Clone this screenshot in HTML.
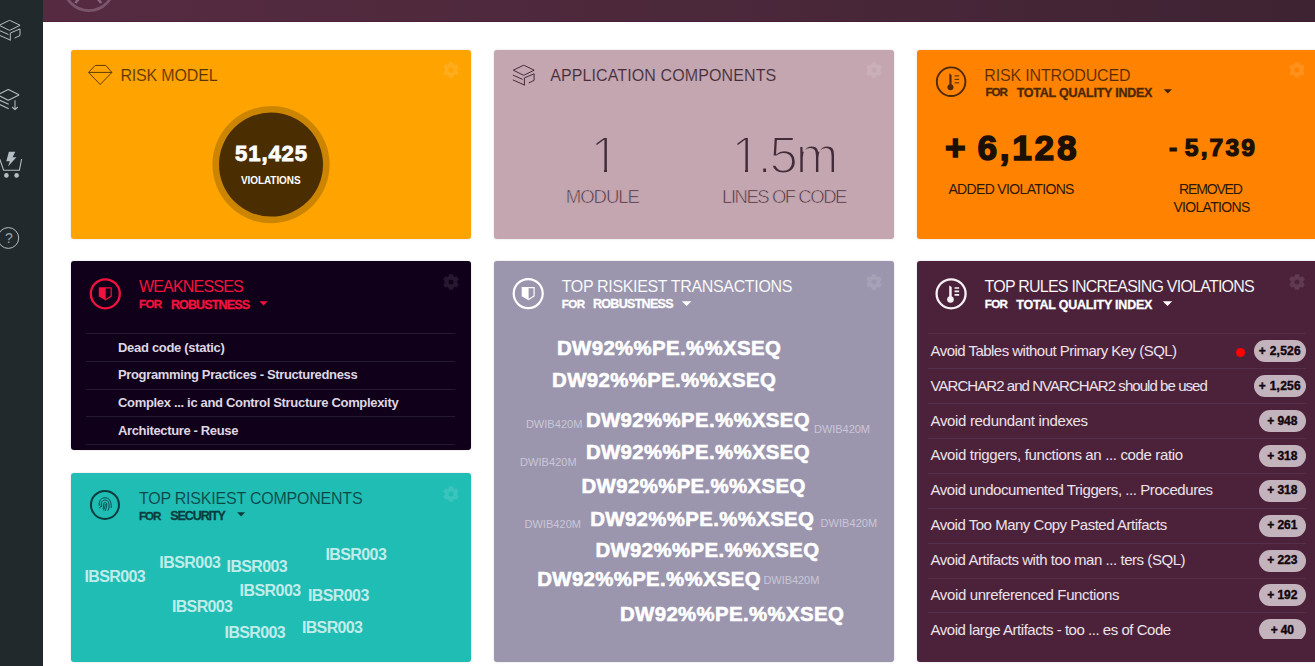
<!DOCTYPE html>
<html lang="en">
<head>
<meta charset="utf-8">
<title>Application Dashboard</title>
<style>
*{box-sizing:border-box;margin:0;padding:0}
html,body{width:1315px;height:666px;overflow:hidden;background:#fff}
body{position:relative;font-family:"Liberation Sans","DejaVu Sans",sans-serif;color:#fff}
.a{position:absolute}
.t{position:absolute;white-space:nowrap;line-height:1;font-weight:400}
svg{position:absolute;overflow:visible}
#side{left:0;top:0;width:43px;height:666px;background:#21292d}
#top{left:43px;top:0;width:1272px;height:22px;background:linear-gradient(90deg,#562b41 0%,#4c283b 50%,#3e2333 100%);border-bottom:1px solid rgba(60,10,40,.3);overflow:hidden}
.card{position:absolute;border-radius:3px;box-shadow:0 0 2px rgba(120,120,160,.35)}
#c1{left:71px;top:50px;width:400px;height:189px;background:#ffa300}
#c2{left:494px;top:50px;width:400px;height:189px;background:#c3a6b0}
#c3{left:917px;top:50px;width:400px;height:189px;background:#ff8300}
#c4{left:71px;top:261px;width:400px;height:189px;background:#11001a}
#c5{left:71px;top:473px;width:400px;height:189px;background:#20bdb5}
#c6{left:494px;top:261px;width:400px;height:401px;background:#9b96ae}
#c7{left:917px;top:261px;width:400px;height:401px;background:#4c223a}
.sep{position:absolute;height:1px}
.pill{position:absolute;height:22px;border-radius:11px;background:#c3b3bd}
</style>
</head>
<body>
<aside id="side" class="a">
<svg style="left:0px;top:0px" width="1" height="1"><g transform="translate(-1.2 20.2) scale(1.0)"><path d="M0.4 5.1 L10.1 0.4 Q10.8 0.1 11.5 0.4 L21.3 5.1 L11.5 9.9 Q10.8 10.2 10.1 9.9 Z M0 10 L9.7 14.3 M0 14.8 L11.5 19.9 M11.5 20.3 V12.8 L21.2 8.7 V15.3 L15.8 17.9" fill="none" stroke="#b4bec3" stroke-width="1.0" stroke-linejoin="round"/></g><path d="M-2.6 94.9 L7.7 89.8 Q8.3 89.5 8.9 89.8 L18.5 94.5 Q19 94.9 18.5 95.3 L8.9 100 Q8.3 100.3 7.7 100 Z M-1 99.9 L8.7 104.3 M-1 104.2 L8.7 108.7 M15 100.3 V109.3 M12.2 107 L15 109.7 L17.8 107" fill="none" stroke="#b4bec3" stroke-width="1.05" stroke-linejoin="round"/><path d="M-0.3 159 L3.6 170.2 H19.4 L21.6 159" fill="none" stroke="#b4bec3" stroke-width="1.1"/><circle cx="6.4" cy="175.4" r="2.3" fill="#b4bec3"/><circle cx="16.6" cy="175.4" r="2.3" fill="#b4bec3"/><path d="M8.9 151.8 H15.3 L12.6 157.2 H16.4 L8 166.4 L9.9 161.2 H6.3 Z" fill="#b4bec3"/><circle cx="8.3" cy="238" r="10.4" fill="none" stroke="#b4bec3" stroke-width="1"/></svg>
<span class="t" style="left:4.9px;top:231.2px;font-size:14px;color:#9aa4a9;">?</span>
</aside>
<header id="top" class="a">
<svg style="left:-43px;top:0px" width="1" height="1"><circle cx="88.9" cy="-14.5" r="25.1" fill="none" stroke="#7a566b" stroke-width="2.8"/><path d="M75.7 3.2 Q76.4 0.8 79 -1 M100.9 3.2 Q100.2 0.8 97.6 -1" fill="none" stroke="#866880" stroke-width="2.4"/></svg>
</header>
<section id="c1" class="card" aria-label="Risk model">
<svg style="left:380.1px;top:20.2px;opacity:0.11" width="1" height="1"><path d="M2.15 -5.60 L1.69 -7.62 L-1.69 -7.62 L-2.15 -5.60 L-3.78 -4.66 L-5.75 -5.27 L-7.44 -2.35 L-5.93 -0.94 L-5.93 0.94 L-7.44 2.35 L-5.75 5.27 L-3.78 4.66 L-2.15 5.60 L-1.69 7.62 L1.69 7.62 L2.15 5.60 L3.78 4.66 L5.75 5.27 L7.44 2.35 L5.93 0.94 L5.93 -0.94 L7.44 -2.35 L5.75 -5.27 L3.78 -4.66Z M2.8 0 A2.8 2.8 0 1 0 -2.8 0 A2.8 2.8 0 1 0 2.8 0Z" fill="#fff" fill-rule="evenodd" stroke="#fff" stroke-width="0.6" stroke-linejoin="round"/></svg>
<svg style="left:-71px;top:-50px" width="1" height="1"><path d="M95.2 65.4 H105.8 L111.9 72.4 L100.2 84.5 L88.6 72.4 Z M88.6 72.4 H111.9" fill="none" stroke="#5e3c02" stroke-width="1" stroke-linejoin="round"/><circle cx="271" cy="164.6" r="58.6" fill="#cc8500"/><circle cx="271" cy="164.6" r="52" fill="#4a2d00"/></svg>
<h2 class="t" style="left:49.4px;top:17.9px;font-size:16px;color:#553500;letter-spacing:-0.165px;-webkit-text-stroke:.15px #ffa300;">RISK MODEL</h2>
<span class="t" style="left:164.1px;top:93.4px;font-size:22.2px;font-weight:700;color:#fff;letter-spacing:0.835px;-webkit-text-stroke:.8px #fff;">51,425</span>
<span class="t" style="left:170px;top:125.7px;font-size:10px;font-weight:700;color:#fff;letter-spacing:-0.089px;">VIOLATIONS</span>
</section>
<section id="c2" class="card" aria-label="Application components">
<svg style="left:380.1px;top:20.2px;opacity:0.11" width="1" height="1"><path d="M2.15 -5.60 L1.69 -7.62 L-1.69 -7.62 L-2.15 -5.60 L-3.78 -4.66 L-5.75 -5.27 L-7.44 -2.35 L-5.93 -0.94 L-5.93 0.94 L-7.44 2.35 L-5.75 5.27 L-3.78 4.66 L-2.15 5.60 L-1.69 7.62 L1.69 7.62 L2.15 5.60 L3.78 4.66 L5.75 5.27 L7.44 2.35 L5.93 0.94 L5.93 -0.94 L7.44 -2.35 L5.75 -5.27 L3.78 -4.66Z M2.8 0 A2.8 2.8 0 1 0 -2.8 0 A2.8 2.8 0 1 0 2.8 0Z" fill="#fff" fill-rule="evenodd" stroke="#fff" stroke-width="0.6" stroke-linejoin="round"/></svg>
<svg style="left:-494px;top:-50px" width="1" height="1"><g transform="translate(512.9 65.1) scale(1.0)"><path d="M0.4 5.1 L10.1 0.4 Q10.8 0.1 11.5 0.4 L21.3 5.1 L11.5 9.9 Q10.8 10.2 10.1 9.9 Z M0 10 L9.7 14.3 M0 14.8 L11.5 19.9 M11.5 20.3 V12.8 L21.2 8.7 V15.3 L15.8 17.9" fill="none" stroke="#432c39" stroke-width="1.0" stroke-linejoin="round"/></g></svg>
<h2 class="t" style="left:56.2px;top:17.9px;font-size:16px;color:#432c39;letter-spacing:0.111px;-webkit-text-stroke:.15px #c3a6b0;">APPLICATION COMPONENTS</h2>
<span class="t" style="left:96.6px;top:80.1px;font-size:51.2px;color:#432c39;-webkit-text-stroke:2px #c3a6b0;">1</span>
<span class="t" style="left:237.4px;top:80.1px;font-size:51.2px;color:#432c39;letter-spacing:-2.286px;-webkit-text-stroke:2px #c3a6b0;">1.5m</span>
<span class="t" style="left:71.8px;top:138.1px;font-size:18.6px;color:#432c39;letter-spacing:-1.090px;-webkit-text-stroke:.65px #c3a6b0;">MODULE</span>
<span class="t" style="left:228.1px;top:138.1px;font-size:18.6px;color:#432c39;letter-spacing:-1.517px;-webkit-text-stroke:.65px #c3a6b0;">LINES OF CODE</span>
<div class="a" style="left:99.5px;top:119.4px;width:10.5px;height:4px;background:#c3a6b0"></div>
<div class="a" style="left:113px;top:119.4px;width:9.5px;height:4px;background:#c3a6b0"></div>
<div class="a" style="left:241px;top:119.4px;width:10.0px;height:4px;background:#c3a6b0"></div>
<div class="a" style="left:254px;top:119.4px;width:10.0px;height:4px;background:#c3a6b0"></div>
</section>
<section id="c3" class="card" aria-label="Risk introduced">
<svg style="left:380.1px;top:20.2px;opacity:0.11" width="1" height="1"><path d="M2.15 -5.60 L1.69 -7.62 L-1.69 -7.62 L-2.15 -5.60 L-3.78 -4.66 L-5.75 -5.27 L-7.44 -2.35 L-5.93 -0.94 L-5.93 0.94 L-7.44 2.35 L-5.75 5.27 L-3.78 4.66 L-2.15 5.60 L-1.69 7.62 L1.69 7.62 L2.15 5.60 L3.78 4.66 L5.75 5.27 L7.44 2.35 L5.93 0.94 L5.93 -0.94 L7.44 -2.35 L5.75 -5.27 L3.78 -4.66Z M2.8 0 A2.8 2.8 0 1 0 -2.8 0 A2.8 2.8 0 1 0 2.8 0Z" fill="#fff" fill-rule="evenodd" stroke="#fff" stroke-width="0.6" stroke-linejoin="round"/></svg>
<svg style="left:-917px;top:-50px" width="1" height="1"><circle cx="951.1" cy="81.7" r="14.3" fill="none" stroke="#4d2a05" stroke-width="1.9"/><path d="M949.35 73.30 L951.55 74.90 V86.2 H949.35 Z" fill="#4d2a05"/><circle cx="950.45" cy="87.35000000000001" r="3.0" fill="#4d2a05"/><path d="M954.5500000000001 75.9 h4.6 M954.5500000000001 79.35000000000001 h4.6 M954.5500000000001 82.85000000000001 h4.6" stroke="#4d2a05" stroke-width="1.0" fill="none"/></svg>
<svg style="left:-917px;top:-50px" width="1" height="1"><path d="M1163.6 89.3H1172.0L1167.8 93.6Z" fill="#3f2204"/></svg>
<h2 class="t" style="left:67.3px;top:18px;font-size:16px;color:#522b04;letter-spacing:-0.157px;-webkit-text-stroke:.15px #ff8300;">RISK INTRODUCED</h2>
<span class="t" style="left:68.45px;top:36.45px;font-size:11.6px;font-weight:700;color:#4a2705;letter-spacing:-1.050px;-webkit-text-stroke:0.3px #4a2705;">FOR</span>
<span class="t" style="left:99.65px;top:36.75px;font-size:12.5px;font-weight:700;color:#4a2705;letter-spacing:-0.237px;-webkit-text-stroke:0.3px #4a2705;">TOTAL QUALITY INDEX</span>
<span class="t" style="left:28.05px;top:80px;font-size:35.3px;font-weight:700;color:#1c0f05;letter-spacing:2.714px;-webkit-text-stroke:1.5px #1c0f05;word-spacing:-3.5px;">+ 6,128</span>
<span class="t" style="left:252.1px;top:86.2px;font-size:24.6px;font-weight:700;color:#1c0f05;letter-spacing:2.118px;-webkit-text-stroke:1.2px #1c0f05;word-spacing:-3.5px;">- 5,739</span>
<span class="t" style="left:31.4px;top:131.9px;font-size:14px;color:#2a1706;letter-spacing:-0.656px;">ADDED VIOLATIONS</span>
<span class="t" style="left:262.1px;top:131.9px;font-size:14px;color:#2a1706;letter-spacing:-1.179px;">REMOVED</span>
<span class="t" style="left:256.4px;top:149.8px;font-size:14px;color:#2a1706;letter-spacing:-0.683px;">VIOLATIONS</span>
</section>
<section id="c4" class="card" aria-label="Weaknesses">
<svg style="left:380.1px;top:21px;opacity:0.09" width="1" height="1"><path d="M2.15 -5.60 L1.69 -7.62 L-1.69 -7.62 L-2.15 -5.60 L-3.78 -4.66 L-5.75 -5.27 L-7.44 -2.35 L-5.93 -0.94 L-5.93 0.94 L-7.44 2.35 L-5.75 5.27 L-3.78 4.66 L-2.15 5.60 L-1.69 7.62 L1.69 7.62 L2.15 5.60 L3.78 4.66 L5.75 5.27 L7.44 2.35 L5.93 0.94 L5.93 -0.94 L7.44 -2.35 L5.75 -5.27 L3.78 -4.66Z M2.8 0 A2.8 2.8 0 1 0 -2.8 0 A2.8 2.8 0 1 0 2.8 0Z" fill="#fff" fill-rule="evenodd" stroke="#fff" stroke-width="0.6" stroke-linejoin="round"/></svg>
<svg style="left:-71px;top:-261px" width="1" height="1"><circle cx="105.3" cy="293.8" r="14.5" fill="none" stroke="#f3123e" stroke-width="2.3"/><path d="M98.8 287.3 H105.7 V300.40000000000003 L98.8 296.40000000000003 Z" fill="#f3123e"/><path d="M105.3 287.90000000000003 H111.2 V296.1 L105.3 299.90000000000003" fill="none" stroke="#f3123e" stroke-width="1.2"/></svg>
<svg style="left:-71px;top:-261px" width="1" height="1"><path d="M259.4 301.2H267.8L263.6 305.6Z" fill="#f3123e"/></svg>
<div class="sep" style="left:15px;top:72px;width:369px;background:#261a31"></div>
<div class="sep" style="left:15px;top:100px;width:369px;background:#261a31"></div>
<div class="sep" style="left:15px;top:128px;width:369px;background:#261a31"></div>
<div class="sep" style="left:15px;top:155px;width:369px;background:#261a31"></div>
<div class="sep" style="left:15px;top:183px;width:369px;background:#261a31"></div>
<h2 class="t" style="left:67.9px;top:18px;font-size:16px;color:#f3123e;letter-spacing:-0.795px;">WEAKNESSES</h2>
<span class="t" style="left:68.05px;top:36.65px;font-size:11.6px;font-weight:700;color:#f3123e;letter-spacing:-0.750px;-webkit-text-stroke:0.3px #f3123e;">FOR</span>
<span class="t" style="left:99.95px;top:37.65px;font-size:12.5px;font-weight:700;color:#f3123e;letter-spacing:-0.864px;-webkit-text-stroke:0.3px #f3123e;">ROBUSTNESS</span>
<span class="t" style="left:47px;top:80.4px;font-size:13px;font-weight:700;color:#ded8e3;letter-spacing:-0.303px;">Dead code (static)</span>
<span class="t" style="left:47px;top:107.2px;font-size:13px;font-weight:700;color:#ded8e3;letter-spacing:-0.358px;">Programming Practices - Structuredness</span>
<span class="t" style="left:47px;top:135.1px;font-size:13px;font-weight:700;color:#ded8e3;letter-spacing:-0.322px;">Complex ... ic and Control Structure Complexity</span>
<span class="t" style="left:47px;top:163.1px;font-size:13px;font-weight:700;color:#ded8e3;letter-spacing:-0.354px;">Architecture - Reuse</span>
</section>
<section id="c5" class="card" aria-label="Top riskiest components">
<svg style="left:380.1px;top:21px;opacity:0.11" width="1" height="1"><path d="M2.15 -5.60 L1.69 -7.62 L-1.69 -7.62 L-2.15 -5.60 L-3.78 -4.66 L-5.75 -5.27 L-7.44 -2.35 L-5.93 -0.94 L-5.93 0.94 L-7.44 2.35 L-5.75 5.27 L-3.78 4.66 L-2.15 5.60 L-1.69 7.62 L1.69 7.62 L2.15 5.60 L3.78 4.66 L5.75 5.27 L7.44 2.35 L5.93 0.94 L5.93 -0.94 L7.44 -2.35 L5.75 -5.27 L3.78 -4.66Z M2.8 0 A2.8 2.8 0 1 0 -2.8 0 A2.8 2.8 0 1 0 2.8 0Z" fill="#fff" fill-rule="evenodd" stroke="#fff" stroke-width="0.6" stroke-linejoin="round"/></svg>
<svg style="left:-71px;top:-473px" width="1" height="1"><circle cx="104.95" cy="504.95" r="14.0" fill="none" stroke="#093d3e" stroke-width="2.0"/><g fill="none" stroke="#093d3e" stroke-width="0.9" stroke-linecap="round"><path d="M99.2 505.4 C98.6 500.2 101.6 497.7 105 497.7 C109 497.7 111.6 500.6 111.2 507.6"/><path d="M101.4 506.4 C100.6 502.1 102.6 500 105.2 500 C108 500 109.4 502.5 109 507 C108.8 508.6 108.4 509.7 108 510.4"/><path d="M103.2 508.6 C103.6 506 103.4 504.6 103.7 503.6 C104.1 502.2 106.4 502.2 106.7 503.8 C107 506 106.1 508.6 105.2 510.7"/><path d="M105.2 504.4 C105.2 506.6 104.5 508.5 103.5 510"/><path d="M99.3 508 C100.3 507.4 101 506.8 101.5 505.9"/></g></svg>
<svg style="left:-71px;top:-473px" width="1" height="1"><path d="M237.1 512.3H245.1L241.1 516.5Z" fill="#093d3e"/></svg>
<h2 class="t" style="left:67.9px;top:17.9px;font-size:16px;color:#0a4746;letter-spacing:-0.218px;-webkit-text-stroke:.15px #20bdb5;">TOP RISKIEST COMPONENTS</h2>
<span class="t" style="left:68.05px;top:36.75px;font-size:11.6px;font-weight:700;color:#093d3e;letter-spacing:-1.100px;-webkit-text-stroke:0.3px #093d3e;">FOR</span>
<span class="t" style="left:99.25px;top:37.05px;font-size:12.5px;font-weight:700;color:#093d3e;letter-spacing:-1.081px;-webkit-text-stroke:0.3px #093d3e;">SECURITY</span>
<span class="t" style="left:13.5px;top:95.9px;font-size:16px;font-weight:700;color:rgba(255,255,255,.73);letter-spacing:-0.621px;">IBSR003</span>
<span class="t" style="left:88.3px;top:81.6px;font-size:16px;font-weight:700;color:rgba(255,255,255,.73);letter-spacing:-0.554px;">IBSR003</span>
<span class="t" style="left:155.6px;top:85.9px;font-size:16px;font-weight:700;color:rgba(255,255,255,.73);letter-spacing:-0.637px;">IBSR003</span>
<span class="t" style="left:254.4px;top:74.1px;font-size:16px;font-weight:700;color:rgba(255,255,255,.73);letter-spacing:-0.587px;">IBSR003</span>
<span class="t" style="left:168.6px;top:110px;font-size:16px;font-weight:700;color:rgba(255,255,255,.73);letter-spacing:-0.554px;">IBSR003</span>
<span class="t" style="left:236.9px;top:114.7px;font-size:16px;font-weight:700;color:rgba(255,255,255,.73);letter-spacing:-0.587px;">IBSR003</span>
<span class="t" style="left:100.9px;top:125.5px;font-size:16px;font-weight:700;color:rgba(255,255,255,.73);letter-spacing:-0.637px;">IBSR003</span>
<span class="t" style="left:153.6px;top:151.9px;font-size:16px;font-weight:700;color:rgba(255,255,255,.73);letter-spacing:-0.637px;">IBSR003</span>
<span class="t" style="left:230.9px;top:147.4px;font-size:16px;font-weight:700;color:rgba(255,255,255,.73);letter-spacing:-0.637px;">IBSR003</span>
</section>
<section id="c6" class="card" aria-label="Top riskiest transactions">
<svg style="left:380.1px;top:21px;opacity:0.11" width="1" height="1"><path d="M2.15 -5.60 L1.69 -7.62 L-1.69 -7.62 L-2.15 -5.60 L-3.78 -4.66 L-5.75 -5.27 L-7.44 -2.35 L-5.93 -0.94 L-5.93 0.94 L-7.44 2.35 L-5.75 5.27 L-3.78 4.66 L-2.15 5.60 L-1.69 7.62 L1.69 7.62 L2.15 5.60 L3.78 4.66 L5.75 5.27 L7.44 2.35 L5.93 0.94 L5.93 -0.94 L7.44 -2.35 L5.75 -5.27 L3.78 -4.66Z M2.8 0 A2.8 2.8 0 1 0 -2.8 0 A2.8 2.8 0 1 0 2.8 0Z" fill="#fff" fill-rule="evenodd" stroke="#fff" stroke-width="0.6" stroke-linejoin="round"/></svg>
<svg style="left:-494px;top:-261px" width="1" height="1"><circle cx="528.2" cy="293.6" r="14.5" fill="none" stroke="#ffffff" stroke-width="2.2"/><path d="M521.7 287.1 H528.6 V300.20000000000005 L521.7 296.20000000000005 Z" fill="#ffffff"/><path d="M528.2 287.70000000000005 H534.1 V295.90000000000003 L528.2 299.70000000000005" fill="none" stroke="#ffffff" stroke-width="1.2"/></svg>
<svg style="left:-494px;top:-261px" width="1" height="1"><path d="M681.8 301.2H691.4L686.5999999999999 306.0Z" fill="#ffffff"/></svg>
<h2 class="t" style="left:67.7px;top:18px;font-size:16px;color:#fff;letter-spacing:-0.340px;-webkit-text-stroke:.12px #9b96ae;">TOP RISKIEST TRANSACTIONS</h2>
<span class="t" style="left:67.85px;top:36.85px;font-size:11.6px;font-weight:700;color:#fff;letter-spacing:-0.650px;-webkit-text-stroke:0.3px #fff;">FOR</span>
<span class="t" style="left:98.95px;top:37.45px;font-size:12.5px;font-weight:700;color:#fff;letter-spacing:-0.687px;-webkit-text-stroke:0.3px #fff;">ROBUSTNESS</span>
<span class="t" style="left:63px;top:76.5px;font-size:20.4px;font-weight:700;color:#fff;letter-spacing:0.361px;-webkit-text-stroke:0.6px #fff;">DW92%%PE.%%XSEQ</span>
<span class="t" style="left:58.1px;top:109.4px;font-size:20.4px;font-weight:700;color:#fff;letter-spacing:0.361px;-webkit-text-stroke:0.6px #fff;">DW92%%PE.%%XSEQ</span>
<span class="t" style="left:91.9px;top:148.7px;font-size:20.4px;font-weight:700;color:#fff;letter-spacing:0.361px;-webkit-text-stroke:0.6px #fff;">DW92%%PE.%%XSEQ</span>
<span class="t" style="left:91.9px;top:180.5px;font-size:20.4px;font-weight:700;color:#fff;letter-spacing:0.361px;-webkit-text-stroke:0.6px #fff;">DW92%%PE.%%XSEQ</span>
<span class="t" style="left:87.5px;top:214.7px;font-size:20.4px;font-weight:700;color:#fff;letter-spacing:0.369px;-webkit-text-stroke:0.6px #fff;">DW92%%PE.%%XSEQ</span>
<span class="t" style="left:96.2px;top:248px;font-size:20.4px;font-weight:700;color:#fff;letter-spacing:0.361px;-webkit-text-stroke:0.6px #fff;">DW92%%PE.%%XSEQ</span>
<span class="t" style="left:101.4px;top:278.6px;font-size:20.4px;font-weight:700;color:#fff;letter-spacing:0.361px;-webkit-text-stroke:0.6px #fff;">DW92%%PE.%%XSEQ</span>
<span class="t" style="left:43.3px;top:307.5px;font-size:20.4px;font-weight:700;color:#fff;letter-spacing:0.326px;-webkit-text-stroke:0.6px #fff;">DW92%%PE.%%XSEQ</span>
<span class="t" style="left:126px;top:342.7px;font-size:20.4px;font-weight:700;color:#fff;letter-spacing:0.361px;-webkit-text-stroke:0.6px #fff;">DW92%%PE.%%XSEQ</span>
<span class="t" style="left:31.9px;top:158.2px;font-size:11px;color:#cac6d8;letter-spacing:0.033px;">DWIB420M</span>
<span class="t" style="left:320px;top:162.8px;font-size:11px;color:#cac6d8;letter-spacing:-0.039px;">DWIB420M</span>
<span class="t" style="left:26.1px;top:195.7px;font-size:11px;color:#cac6d8;letter-spacing:0.047px;">DWIB420M</span>
<span class="t" style="left:30.4px;top:258px;font-size:11px;color:#cac6d8;letter-spacing:0.047px;">DWIB420M</span>
<span class="t" style="left:326.6px;top:257.1px;font-size:11px;color:#cac6d8;letter-spacing:0.047px;">DWIB420M</span>
<span class="t" style="left:269.4px;top:314.1px;font-size:11px;color:#cac6d8;letter-spacing:-0.039px;">DWIB420M</span>
</section>
<section id="c7" class="card" aria-label="Top rules increasing violations">
<svg style="left:380.1px;top:21px;opacity:0.11" width="1" height="1"><path d="M2.15 -5.60 L1.69 -7.62 L-1.69 -7.62 L-2.15 -5.60 L-3.78 -4.66 L-5.75 -5.27 L-7.44 -2.35 L-5.93 -0.94 L-5.93 0.94 L-7.44 2.35 L-5.75 5.27 L-3.78 4.66 L-2.15 5.60 L-1.69 7.62 L1.69 7.62 L2.15 5.60 L3.78 4.66 L5.75 5.27 L7.44 2.35 L5.93 0.94 L5.93 -0.94 L7.44 -2.35 L5.75 -5.27 L3.78 -4.66Z M2.8 0 A2.8 2.8 0 1 0 -2.8 0 A2.8 2.8 0 1 0 2.8 0Z" fill="#fff" fill-rule="evenodd" stroke="#fff" stroke-width="0.6" stroke-linejoin="round"/></svg>
<svg style="left:-917px;top:-261px" width="1" height="1"><circle cx="951.1" cy="293.8" r="14.5" fill="none" stroke="#f8f1f5" stroke-width="2.3"/><path d="M949.20 285.40 L951.70 287.00 V298.3 H949.20 Z" fill="#f8f1f5"/><circle cx="950.45" cy="299.45" r="3.3" fill="#f8f1f5"/><path d="M954.5500000000001 288.0 h4.6 M954.5500000000001 291.45 h4.6 M954.5500000000001 294.95 h4.6" stroke="#f8f1f5" stroke-width="1.7" fill="none"/></svg>
<svg style="left:-917px;top:-261px" width="1" height="1"><path d="M1162.8 301.2H1172.2L1167.5 306.0Z" fill="#ffffff"/></svg>
<div class="a list" style="left:0px;top:0px;width:398px;height:378px;overflow:hidden">
<div class="sep" style="left:11px;top:72px;width:378px;background:#56304a"></div>
<div class="sep" style="left:11px;top:107px;width:378px;background:#56304a"></div>
<div class="sep" style="left:11px;top:142px;width:378px;background:#56304a"></div>
<div class="sep" style="left:11px;top:177px;width:378px;background:#56304a"></div>
<div class="sep" style="left:11px;top:212px;width:378px;background:#56304a"></div>
<div class="sep" style="left:11px;top:247px;width:378px;background:#56304a"></div>
<div class="sep" style="left:11px;top:282px;width:378px;background:#56304a"></div>
<div class="sep" style="left:11px;top:317px;width:378px;background:#56304a"></div>
<div class="sep" style="left:11px;top:351px;width:378px;background:#56304a"></div>
<div class="pill" style="left:337.0px;top:79.2px;width:52.0px"></div>
<div class="pill" style="left:337.0px;top:114.1px;width:52.0px"></div>
<div class="pill" style="left:341.8px;top:149.0px;width:47.2px"></div>
<div class="pill" style="left:341.8px;top:183.8px;width:47.2px"></div>
<div class="pill" style="left:341.8px;top:218.7px;width:47.2px"></div>
<div class="pill" style="left:341.8px;top:253.6px;width:47.2px"></div>
<div class="pill" style="left:341.8px;top:288.5px;width:47.2px"></div>
<div class="pill" style="left:341.8px;top:323.4px;width:47.2px"></div>
<div class="pill" style="left:341.8px;top:358.2px;width:47.2px"></div>
<div class="a" style="left:319px;top:87px;width:9px;height:9px;border-radius:5px;background:#ff0000"></div>
</div>
<h2 class="t" style="left:67.6px;top:18.2px;font-size:16px;color:#fff;letter-spacing:-0.777px;-webkit-text-stroke:.12px #4c223a;">TOP RULES INCREASING VIOLATIONS</h2>
<span class="t" style="left:67.75px;top:37.35px;font-size:11.6px;font-weight:700;color:#fff;letter-spacing:-0.700px;-webkit-text-stroke:0.3px #fff;">FOR</span>
<span class="t" style="left:99.25px;top:38.05px;font-size:12.5px;font-weight:700;color:#fff;letter-spacing:-0.215px;-webkit-text-stroke:0.3px #fff;">TOTAL QUALITY INDEX</span>
<span class="t" style="left:13.5px;top:81.8px;font-size:15px;color:#ece3ea;letter-spacing:-0.530px;">Avoid Tables without Primary Key (SQL)</span>
<span class="t" style="left:13.5px;top:116.67px;font-size:15px;color:#ece3ea;letter-spacing:-0.942px;">VARCHAR2 and NVARCHAR2 should be used</span>
<span class="t" style="left:13.5px;top:151.54px;font-size:15px;color:#ece3ea;letter-spacing:-0.329px;">Avoid redundant indexes</span>
<span class="t" style="left:13.5px;top:186.41px;font-size:15px;color:#ece3ea;letter-spacing:-0.351px;">Avoid triggers, functions an ... code ratio</span>
<span class="t" style="left:13.5px;top:221.28px;font-size:15px;color:#ece3ea;letter-spacing:-0.431px;">Avoid undocumented Triggers, ... Procedures</span>
<span class="t" style="left:13.5px;top:256.15px;font-size:15px;color:#ece3ea;letter-spacing:-0.487px;">Avoid Too Many Copy Pasted Artifacts</span>
<span class="t" style="left:13.5px;top:291.02px;font-size:15px;color:#ece3ea;letter-spacing:-0.451px;">Avoid Artifacts with too man ... ters (SQL)</span>
<span class="t" style="left:13.5px;top:325.89px;font-size:15px;color:#ece3ea;letter-spacing:-0.375px;">Avoid unreferenced Functions</span>
<span class="t" style="left:13.5px;top:360.76px;font-size:15px;color:#ece3ea;letter-spacing:-0.467px;">Avoid large Artifacts - too ... es of Code</span>
<span class="t" style="left:341.75px;top:83.9px;font-size:12px;font-weight:700;color:#12060e;letter-spacing:0.267px;-webkit-text-stroke:0.4px #12060e;">+ 2,526</span>
<span class="t" style="left:341.75px;top:118.77px;font-size:12px;font-weight:700;color:#12060e;letter-spacing:0.267px;-webkit-text-stroke:0.4px #12060e;">+ 1,256</span>
<span class="t" style="left:350.25px;top:153.64px;font-size:12px;font-weight:700;color:#12060e;letter-spacing:-0.047px;-webkit-text-stroke:0.4px #12060e;">+ 948</span>
<span class="t" style="left:350.25px;top:188.51px;font-size:12px;font-weight:700;color:#12060e;letter-spacing:-0.047px;-webkit-text-stroke:0.4px #12060e;">+ 318</span>
<span class="t" style="left:350.25px;top:223.38px;font-size:12px;font-weight:700;color:#12060e;letter-spacing:-0.047px;-webkit-text-stroke:0.4px #12060e;">+ 318</span>
<span class="t" style="left:350.25px;top:258.25px;font-size:12px;font-weight:700;color:#12060e;letter-spacing:-0.047px;-webkit-text-stroke:0.4px #12060e;">+ 261</span>
<span class="t" style="left:350.25px;top:293.12px;font-size:12px;font-weight:700;color:#12060e;letter-spacing:-0.047px;-webkit-text-stroke:0.4px #12060e;">+ 223</span>
<span class="t" style="left:350.25px;top:327.99px;font-size:12px;font-weight:700;color:#12060e;letter-spacing:-0.047px;-webkit-text-stroke:0.4px #12060e;">+ 192</span>
<span class="t" style="left:353.7px;top:362.86px;font-size:12px;font-weight:700;color:#12060e;letter-spacing:-0.139px;-webkit-text-stroke:0.4px #12060e;">+ 40</span>
</section>
</body>
</html>
